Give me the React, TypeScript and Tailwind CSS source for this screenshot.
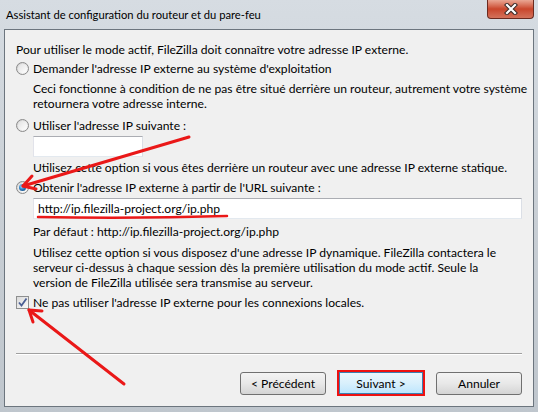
import React from "react";

function Radio({ checked }: { checked?: boolean }) {
  return (
    <div className="w-[13px] h-[13px] shrink-0 rounded-full border border-[#8a8a8a] bg-gradient-to-br from-[#cfcfcf] to-[#fbfbfb] flex items-center justify-center">
      <div className="w-[9px] h-[9px] rounded-full bg-gradient-to-br from-[#e2e2e2] to-[#ffffff] flex items-center justify-center">
        {checked && (
          <div className="w-[7px] h-[7px] rounded-full bg-[radial-gradient(circle_at_40%_35%,#a8e0ff_0%,#2f82c8_45%,#0c3563_100%)]" />
        )}
      </div>
    </div>
  );
}

function Checkbox() {
  return (
    <div className="w-[13px] h-[13px] shrink-0 border border-[#8e8f8f] bg-white flex items-center justify-center">
      <div className="w-[11px] h-[11px] bg-gradient-to-br from-[#dadada] to-[#fafafa] relative">
        <svg width="11" height="11" viewBox="0 0 11 11" className="absolute inset-0">
          <path d="M2 5.5 L4.5 8.5 L9.5 1.5" stroke="#4b5f94" strokeWidth="1.8" fill="none" />
        </svg>
      </div>
    </div>
  );
}

function Button({ label }: { label: string }) {
  return (
    <div className="w-[86px] h-[23px] rounded-[3px] border border-[#707070] bg-gradient-to-b from-[#f3f3f3] via-[#e8e8e8] to-[#d4d4d4] flex items-center justify-center text-black whitespace-nowrap">
      {label}
    </div>
  );
}

export default function App() {
  return (
    <div className="relative w-[538px] h-[412px] overflow-hidden bg-gradient-to-b from-[#d6dce2] via-[#c9cfd5] to-[#bfc6cd] flex flex-col font-['Lato',sans-serif] text-[12.1px] leading-[15px] text-black whitespace-nowrap">
      {/* title bar */}
      <div className="h-[29px] flex items-start shrink-0">
        <div className="pl-[6px] pt-[7px] text-[11.2px] leading-[15px] text-black">
          Assistant de configuration du routeur et du pare-feu
        </div>
        <div className="ml-auto mr-[4px] w-[47px] h-[19px] rounded-b-[4px] border border-t-0 border-[#6b2a1f] bg-gradient-to-b from-[#e9a693] via-[#c9452b] to-[#d3715a] flex items-center justify-center">
          <svg width="16" height="12" viewBox="0 0 16 12">
            <path d="M4 2 L12 10 M12 2 L4 10" stroke="#3b2a27" strokeWidth="4.2" strokeLinecap="square" />
            <path d="M4 2 L12 10 M12 2 L4 10" stroke="#ffffff" strokeWidth="2.2" strokeLinecap="square" />
          </svg>
        </div>
      </div>

      {/* panel */}
      <div className="flex-1 ml-[4px] mr-[4px] mb-[5px] border border-[#6c757e] bg-[#f0f0f0] px-[11px] flex flex-col">
        <div className="mt-[12px] h-[15px]">
          Pour utiliser le mode actif, FileZilla doit connaître votre adresse IP externe.
        </div>

        <div className="mt-[4px] flex items-center gap-[4px] h-[15px]">
          <Radio />
          <span>Demander l'adresse IP externe au système d'exploitation</span>
        </div>
        <div className="mt-[5px] pl-[17px] h-[30px]">
          Ceci fonctionne à condition de ne pas être situé derrière un routeur, autrement votre système
          <br />
          retournera votre adresse interne.
        </div>

        <div className="mt-[7px] flex items-center gap-[4px] h-[15px]">
          <Radio />
          <span>Utiliser l'adresse IP suivante :</span>
        </div>
        <div className="mt-[3px] ml-[17px] w-[110px] h-[21px] bg-white border border-[#abadb3] border-l-[#e2e3ea] border-r-[#dbdfe6] border-b-[#e3e9ef]" />
        <div className="mt-[3px] pl-[17px] h-[15px]">
          Utilisez cette option si vous êtes derrière un routeur avec une adresse IP externe statique.
        </div>

        <div className="mt-[5px] flex items-center gap-[4px] h-[15px]">
          <Radio checked />
          <span>Obtenir l'adresse IP externe à partir de l'URL suivante :</span>
        </div>
        <div className="mt-[3px] ml-[17px] h-[21px] bg-white border border-[#abadb3] border-l-[#e2e3ea] border-r-[#dbdfe6] border-b-[#e3e9ef] flex items-center pl-[4px]">
          http://ip.filezilla-project.org/ip.php
        </div>
        <div className="mt-[5px] pl-[17px] h-[15px]">
          Par défaut : http://ip.filezilla-project.org/ip.php
        </div>
        <div className="mt-[6px] pl-[17px] h-[45px]">
          Utilisez cette option si vous disposez d'une adresse IP dynamique. FileZilla contactera le
          <br />
          serveur ci-dessus à chaque session dès la première utilisation du mode actif. Seule la
          <br />
          version de FileZilla utilisée sera transmise au serveur.
        </div>

        <div className="mt-[5px] flex items-center gap-[4px] h-[15px]">
          <Checkbox />
          <span>Ne pas utiliser l'adresse IP externe pour les connexions locales.</span>
        </div>

        <div className="mt-[43px] border-t border-[#a0a0a0] border-b border-b-white" />

        <div className="mt-[15px] flex justify-end items-center gap-[11px]">
          <Button label="< Précédent" />
          <div className="w-[88px] h-[26px] border-2 border-[#ee1111] flex items-center justify-center">
            <div className="w-[84px] h-[22px] flex items-center justify-center bg-gradient-to-b from-[#eaf6fd] via-[#d9f0fc] to-[#bee6fd] border border-[#3c7fb1]">
              Suivant &gt;
            </div>
          </div>
          <Button label="Annuler" />
        </div>
      </div>

      {/* annotations overlay */}
      <svg className="absolute inset-0 pointer-events-none" width="538" height="412" viewBox="0 0 538 412">
        <g stroke="#ea1818" strokeWidth="3" fill="none" strokeLinecap="round" strokeLinejoin="round">
          <path d="M189 137 L23 186" />
          <path d="M32 176 L23 186 L36 189" />
          <path d="M124 384 L29 310" />
          <path d="M33 322 L29 310 L42 311" />
          <path d="M38 217 Q130 219 227 216" strokeWidth="2.5" />
        </g>
      </svg>
    </div>
  );
}
